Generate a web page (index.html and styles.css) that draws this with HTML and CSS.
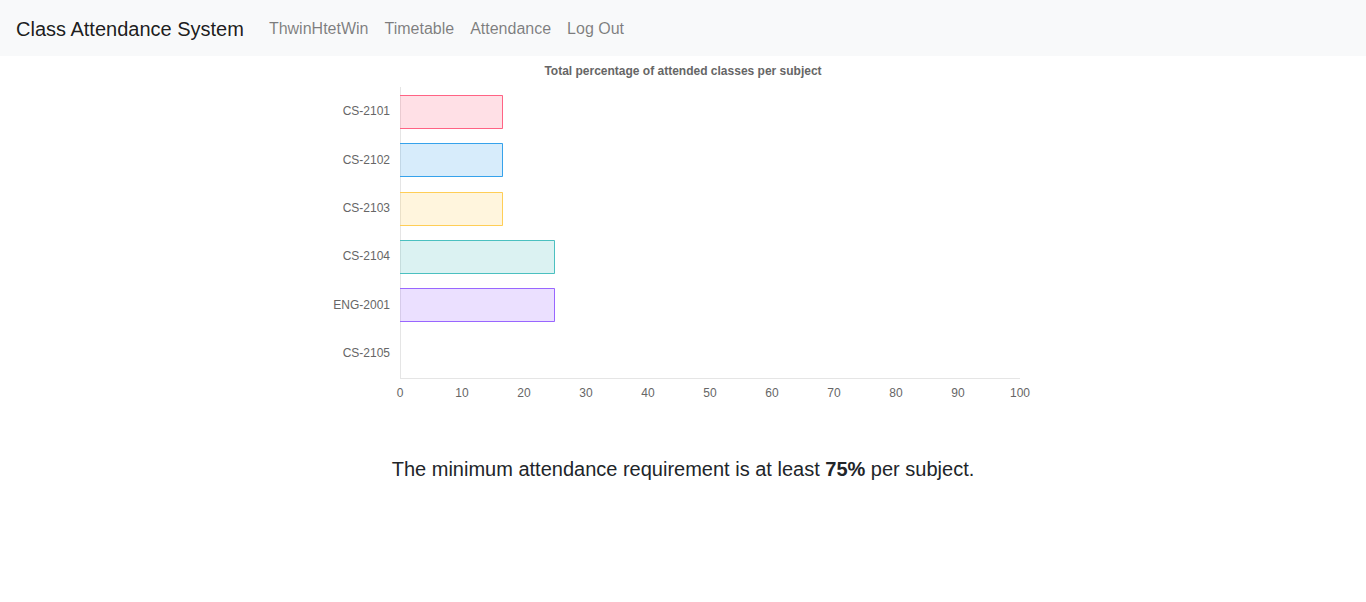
FILE: index.html
```html
<!DOCTYPE html>
<html lang="en">
<head>
<meta charset="utf-8">
<title>Class Attendance System</title>
<link rel="stylesheet" href="styles.css">
</head>
<body>
<nav class="navbar">
  <a class="brand" href="#">Class Attendance System</a>
  <ul class="nav">
    <li><a class="nav-link" href="#">ThwinHtetWin</a></li>
    <li><a class="nav-link" href="#">Timetable</a></li>
    <li><a class="nav-link" href="#">Attendance</a></li>
    <li><a class="nav-link" href="#">Log Out</a></li>
  </ul>
</nav>
<main class="main">
  <svg class="chart" width="720" height="350" viewBox="0 0 720 350" xmlns="http://www.w3.org/2000/svg">
    <text class="title" x="360" y="19" text-anchor="middle">Total percentage of attended classes per subject</text>
    <!-- axes -->
    <line x1="77.5" y1="31" x2="77.5" y2="322" class="axis"/>
    <line x1="77" y1="322.5" x2="697" y2="322.5" class="axis"/>
    <!-- bars -->
    <rect x="77" y="39" width="103" height="34" fill="rgba(255,99,132,0.2)"/>
    <path d="M77 39.5H179.5V72.5H77" fill="none" stroke="rgb(255,99,132)"/>
    <rect x="77" y="87" width="103" height="34" fill="rgba(54,162,235,0.2)"/>
    <path d="M77 87.5H179.5V120.5H77" fill="none" stroke="rgb(54,162,235)"/>
    <rect x="77" y="136" width="103" height="34" fill="rgba(255,206,86,0.2)"/>
    <path d="M77 136.5H179.5V169.5H77" fill="none" stroke="rgb(255,206,86)"/>
    <rect x="77" y="184" width="155" height="34" fill="rgba(75,192,192,0.2)"/>
    <path d="M77 184.5H231.5V217.5H77" fill="none" stroke="rgb(75,192,192)"/>
    <rect x="77" y="232" width="155" height="34" fill="rgba(153,102,255,0.2)"/>
    <path d="M77 232.5H231.5V265.5H77" fill="none" stroke="rgb(153,102,255)"/>
    <!-- y labels -->
    <g class="tick" text-anchor="end">
      <text x="67" y="59">CS-2101</text>
      <text x="67" y="108">CS-2102</text>
      <text x="67" y="156">CS-2103</text>
      <text x="67" y="204">CS-2104</text>
      <text x="67" y="253">ENG-2001</text>
      <text x="67" y="301">CS-2105</text>
    </g>
    <!-- x labels -->
    <g class="tick" text-anchor="middle">
      <text x="77" y="341">0</text>
      <text x="139" y="341">10</text>
      <text x="201" y="341">20</text>
      <text x="263" y="341">30</text>
      <text x="325" y="341">40</text>
      <text x="387" y="341">50</text>
      <text x="449" y="341">60</text>
      <text x="511" y="341">70</text>
      <text x="573" y="341">80</text>
      <text x="635" y="341">90</text>
      <text x="697" y="341">100</text>
    </g>
  </svg>
  <p class="note">The minimum attendance requirement is at least <b>75%</b> per subject.</p>
</main>
</body>
</html>
```

FILE: styles.css
```css
* { box-sizing: border-box; }
body {
  margin: 0;
  font-family: "Liberation Sans", Arial, sans-serif;
  font-size: 16px;
  line-height: 1.5;
  color: #212529;
  background: #fff;
}
.navbar {
  display: flex;
  align-items: center;
  height: 56px;
  padding: 9px 16px 7px;
  background: #f8f9fa;
}
.brand {
  font-size: 20px;
  line-height: 30px;
  color: rgba(0,0,0,.9);
  text-decoration: none;
  margin-right: 17px;
}
.nav {
  display: flex;
  list-style: none;
  margin: 0;
  padding: 0;
}
.nav-link {
  display: block;
  padding: 8px;
  color: rgba(0,0,0,.5);
  text-decoration: none;
}
.main {
  display: flex;
  flex-direction: column;
  align-items: center;
}
.chart {
  display: block;
  font-family: "Liberation Sans", Arial, sans-serif;
}
.title {
  font-size: 12px;
  font-weight: bold;
  fill: #666;
}
.tick {
  font-size: 12px;
  fill: #666;
}
.axis {
  stroke: rgba(0,0,0,0.1);
  stroke-width: 1;
}
.note {
  margin: 48px 0 0;
  font-size: 20px;
  line-height: 30px;
  text-align: center;
}
```
